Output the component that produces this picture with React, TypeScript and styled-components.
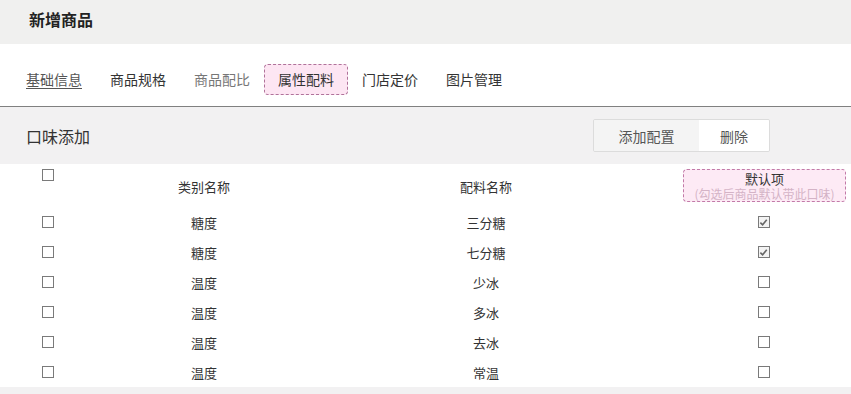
import React from 'react';
import styled, { createGlobalStyle } from 'styled-components';

interface TasteRow {
  category: string;
  name: string;
  isDefault: boolean;
}

const rows: TasteRow[] = [
  { category: '糖度', name: '三分糖', isDefault: true },
  { category: '糖度', name: '七分糖', isDefault: true },
  { category: '温度', name: '少冰', isDefault: false },
  { category: '温度', name: '多冰', isDefault: false },
  { category: '温度', name: '去冰', isDefault: false },
  { category: '温度', name: '常温', isDefault: false },
];

const tabs = ['基础信息', '商品规格', '商品配比', '属性配料', '门店定价', '图片管理'];

const GlobalStyle = createGlobalStyle`
  body {
    margin: 0;
    background: #f2f1f2;
    font-family: "Noto Sans CJK SC", "Noto Sans", sans-serif;
    color: #333;
  }
`;

const Page = styled.div`
  width: 851px;
  height: 394px;
  overflow: hidden;
  background: #f2f1f2;
`;

const TopBar = styled.div`
  height: 44px;
  box-sizing: border-box;
  background: #f0f0ef;
  display: flex;
  align-items: center;
  padding: 0 0 6px 29px;
`;

const PageTitle = styled.h1`
  margin: 0;
  font-size: 16px;
  font-weight: 700;
  color: #222;
`;

const TabBar = styled.div`
  height: 63px;
  box-sizing: border-box;
  background: #fff;
  display: flex;
  align-items: center;
  padding: 8px 0 0 12px;
  border-bottom: 1.5px solid #808080;
`;

const Tab = styled.div<{ $active?: boolean; $tone: string; $underline?: boolean }>`
  height: 31px;
  box-sizing: border-box;
  padding: 0 14px;
  display: flex;
  align-items: center;
  font-size: 14px;
  color: ${(p) => p.$tone};
  text-decoration: ${(p) => (p.$underline ? 'underline' : 'none')};
  text-underline-offset: 3px;
  ${(p) =>
    p.$active &&
    `
    background: #fde6f3;
    border: 1.5px dashed #b0729a;
    border-radius: 4px;
    padding: 0 13px;
  `}
`;

const Section = styled.div`
  height: 57px;
  display: flex;
  align-items: center;
  justify-content: space-between;
  padding: 0 81px 0 26px;
`;

const SectionTitle = styled.div`
  font-size: 16px;
  color: #333;
`;

const ButtonGroup = styled.div`
  display: flex;
  height: 31px;
  border: 1px solid #dcdcdc;
  border-radius: 2px;
  overflow: hidden;
`;

const GroupButton = styled.div<{ $light?: boolean }>`
  display: flex;
  align-items: center;
  justify-content: center;
  width: ${(p) => (p.$light ? '70px' : '105px')};
  font-size: 14px;
  color: #555;
  background: ${(p) => (p.$light ? '#fff' : '#f4f4f4')};
`;

const Table = styled.div`
  background: #fff;
  display: grid;
  grid-template-columns: 96px 216px 348px 1fr;
  grid-template-rows: 43px;
  grid-auto-rows: 30px;
`;

const Cell = styled.div`
  display: flex;
  align-items: center;
  justify-content: center;
  font-size: 13px;
  color: #333;
`;

const HeadText = styled(Cell)`
  padding-top: 1px;
`;

const CheckCell = styled(Cell)<{ $top?: boolean }>`
  align-items: ${(p) => (p.$top ? 'flex-start' : 'center')};
  padding-top: ${(p) => (p.$top ? '5px' : '0')};
`;

const DefaultCell = styled(Cell)`
  padding-left: 16px;
`;

const DefaultHeadCell = styled.div`
  display: flex;
  align-items: flex-start;
  padding: 5px 0 0 23px;
`;

const DefaultHead = styled.div`
  box-sizing: border-box;
  width: 163px;
  height: 33px;
  background: #fdeaf5;
  border: 1.5px dashed #c27aa8;
  border-radius: 4px;
  display: flex;
  flex-direction: column;
  align-items: center;
  justify-content: center;
`;

const DefaultLabel = styled.span`
  font-size: 13px;
  line-height: 15px;
  color: #333;
`;

const DefaultHint = styled.span`
  font-size: 12px;
  line-height: 15px;
  color: #d4b3c6;
  white-space: nowrap;
`;

const Box = styled.span<{ $checked?: boolean }>`
  box-sizing: border-box;
  width: 12px;
  height: 12px;
  border: 1px solid #7a7a7a;
  background: ${(p) => (p.$checked ? '#f3f3f3' : '#fff')};
  display: flex;
  align-items: center;
  justify-content: center;
`;

const Check: React.FC<{ checked?: boolean }> = ({ checked }) => (
  <Box $checked={checked}>
    {checked && (
      <svg width="9" height="9" viewBox="0 0 10 10">
        <path d="M1.5 5.2 L4 7.6 L8.6 2" fill="none" stroke="#666" strokeWidth="1.8" />
      </svg>
    )}
  </Box>
);

const Row = styled.div`
  display: contents;
`;

export default function App() {
  return (
    <Page>
      <GlobalStyle />
      <TopBar>
        <PageTitle>新增商品</PageTitle>
      </TopBar>
      <TabBar>
        {tabs.map((t, i) => (
          <Tab
            key={t}
            $active={i === 3}
            $underline={i === 0}
            $tone={i === 0 ? '#555' : i === 2 ? '#777' : '#333'}
          >
            {t}
          </Tab>
        ))}
      </TabBar>
      <Section>
        <SectionTitle>口味添加</SectionTitle>
        <ButtonGroup>
          <GroupButton>添加配置</GroupButton>
          <GroupButton $light>删除</GroupButton>
        </ButtonGroup>
      </Section>
      <Table>
        <Row>
          <CheckCell $top>
            <Check />
          </CheckCell>
          <HeadText>类别名称</HeadText>
          <HeadText>配料名称</HeadText>
          <DefaultHeadCell>
            <DefaultHead>
              <DefaultLabel>默认项</DefaultLabel>
              <DefaultHint>(勾选后商品默认带此口味)</DefaultHint>
            </DefaultHead>
          </DefaultHeadCell>
        </Row>
        {rows.map((r, i) => (
          <Row key={i}>
            <CheckCell>
              <Check />
            </CheckCell>
            <Cell>{r.category}</Cell>
            <Cell>{r.name}</Cell>
            <DefaultCell>
              <Check checked={r.isDefault} />
            </DefaultCell>
          </Row>
        ))}
      </Table>
    </Page>
  );
}
